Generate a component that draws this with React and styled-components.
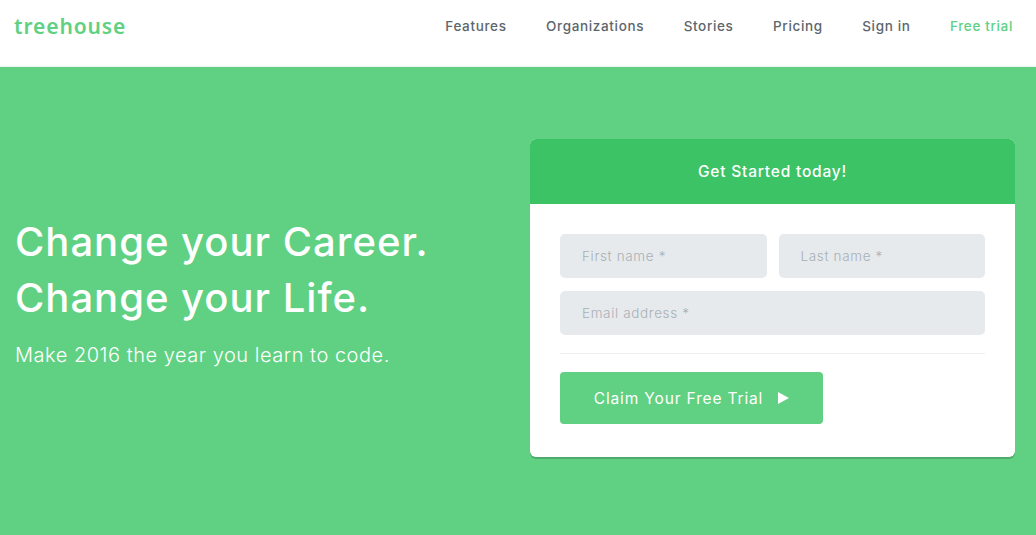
import React from 'react'
import styled, { createGlobalStyle } from 'styled-components'

const GlobalStyle = createGlobalStyle`
  html, body {
    margin: 0;
    padding: 0;
    height: 100%;
    overflow: hidden;
    background: #60d182;
    font-family: 'Inter', 'Liberation Sans', sans-serif;
  }
  * { box-sizing: border-box; }
`

const Page = styled.div`
  width: 1036px;
  height: 535px;
  display: flex;
  flex-direction: column;
`

const Header = styled.header`
  height: 67px;
  flex: none;
  background: #fff;
  border-bottom: 1px solid #eef0f1;
  display: flex;
  align-items: center;
  justify-content: space-between;
  padding: 0 23px 14px 14px;
`

const Logo = styled.a`
  font-family: 'Noto Sans', sans-serif;
  font-size: 21px;
  font-weight: 650;
  letter-spacing: 0.9px;
  color: #60d182;
`

const Nav = styled.nav`
  display: flex;
  gap: 39.5px;
`

const NavLink = styled.a`
  font-size: 13.5px;
  font-weight: 500;
  letter-spacing: 0.65px;
  color: ${({ $accent }) => ($accent ? '#60d182' : '#5c666c')};
`

const Hero = styled.main`
  flex: 1;
  display: flex;
  justify-content: space-between;
  padding: 72px 21px 0 15px;
  background: #60d182;
`

const Intro = styled.div`
  padding-top: 75px;
  color: #fff;
`

const Headline = styled.h1`
  margin: 0 0 15px;
  font-size: 40px;
  font-weight: 500;
  line-height: 56px;
  letter-spacing: 1px;
`

const Subline = styled.p`
  margin: 0;
  font-size: 20px;
  font-weight: 300;
  line-height: 28px;
  letter-spacing: 0.52px;
`

const Card = styled.form`
  width: 485px;
  height: 318px;
  background: #fff;
  border-radius: 6px;
  box-shadow: 0 2px 0 rgba(0, 0, 0, 0.18);
  overflow: hidden;
`

const CardTitle = styled.h2`
  margin: 0;
  height: 65px;
  display: flex;
  align-items: center;
  justify-content: center;
  background: #3cc366;
  color: #fff;
  font-size: 15.5px;
  font-weight: 500;
  letter-spacing: 0.8px;
`

const CardBody = styled.div`
  padding: 30px 30px 0;
`

const FieldRow = styled.div`
  display: flex;
  gap: 12px;
  margin-bottom: 13px;
`

const Field = styled.input`
  flex: 1;
  min-width: 0;
  height: 44px;
  padding: 0 22px;
  border: 0;
  border-radius: 5px;
  background: #e6eaed;
  font-family: inherit;
  font-size: 13.5px;
  font-weight: 300;
  letter-spacing: 0.65px;
  &::placeholder {
    color: #a9b0b5;
    opacity: 1;
  }
`

const Divider = styled.hr`
  margin: 18px 0;
  border: 0;
  border-top: 1px solid #edeff0;
`

const Submit = styled.button`
  width: 263px;
  height: 52px;
  display: flex;
  align-items: center;
  justify-content: center;
  gap: 15px;
  border: 0;
  border-radius: 4px;
  background: #60d182;
  color: #fff;
  font-family: inherit;
  font-size: 15.5px;
  font-weight: 400;
  letter-spacing: 0.85px;
`

function PlayIcon() {
  return (
    <svg width="11" height="12" viewBox="0 0 11 12">
      <path d="M0 0 L11 6 L0 12 Z" fill="#fff" />
    </svg>
  )
}

const links = ['Features', 'Organizations', 'Stories', 'Pricing', 'Sign in']

export default function App() {
  return (
    <Page>
      <GlobalStyle />
      <Header>
        <Logo>treehouse</Logo>
        <Nav>
          {links.map((link) => (
            <NavLink key={link}>{link}</NavLink>
          ))}
          <NavLink $accent>Free trial</NavLink>
        </Nav>
      </Header>
      <Hero>
        <Intro>
          <Headline>
            Change your Career.
            <br />
            Change your Life.
          </Headline>
          <Subline>Make 2016 the year you learn to code.</Subline>
        </Intro>
        <Card>
          <CardTitle>Get Started today!</CardTitle>
          <CardBody>
            <FieldRow>
              <Field placeholder="First name *" />
              <Field placeholder="Last name *" />
            </FieldRow>
            <FieldRow>
              <Field placeholder="Email address *" />
            </FieldRow>
            <Divider />
            <Submit type="button">
              Claim Your Free Trial
              <PlayIcon />
            </Submit>
          </CardBody>
        </Card>
      </Hero>
    </Page>
  )
}
